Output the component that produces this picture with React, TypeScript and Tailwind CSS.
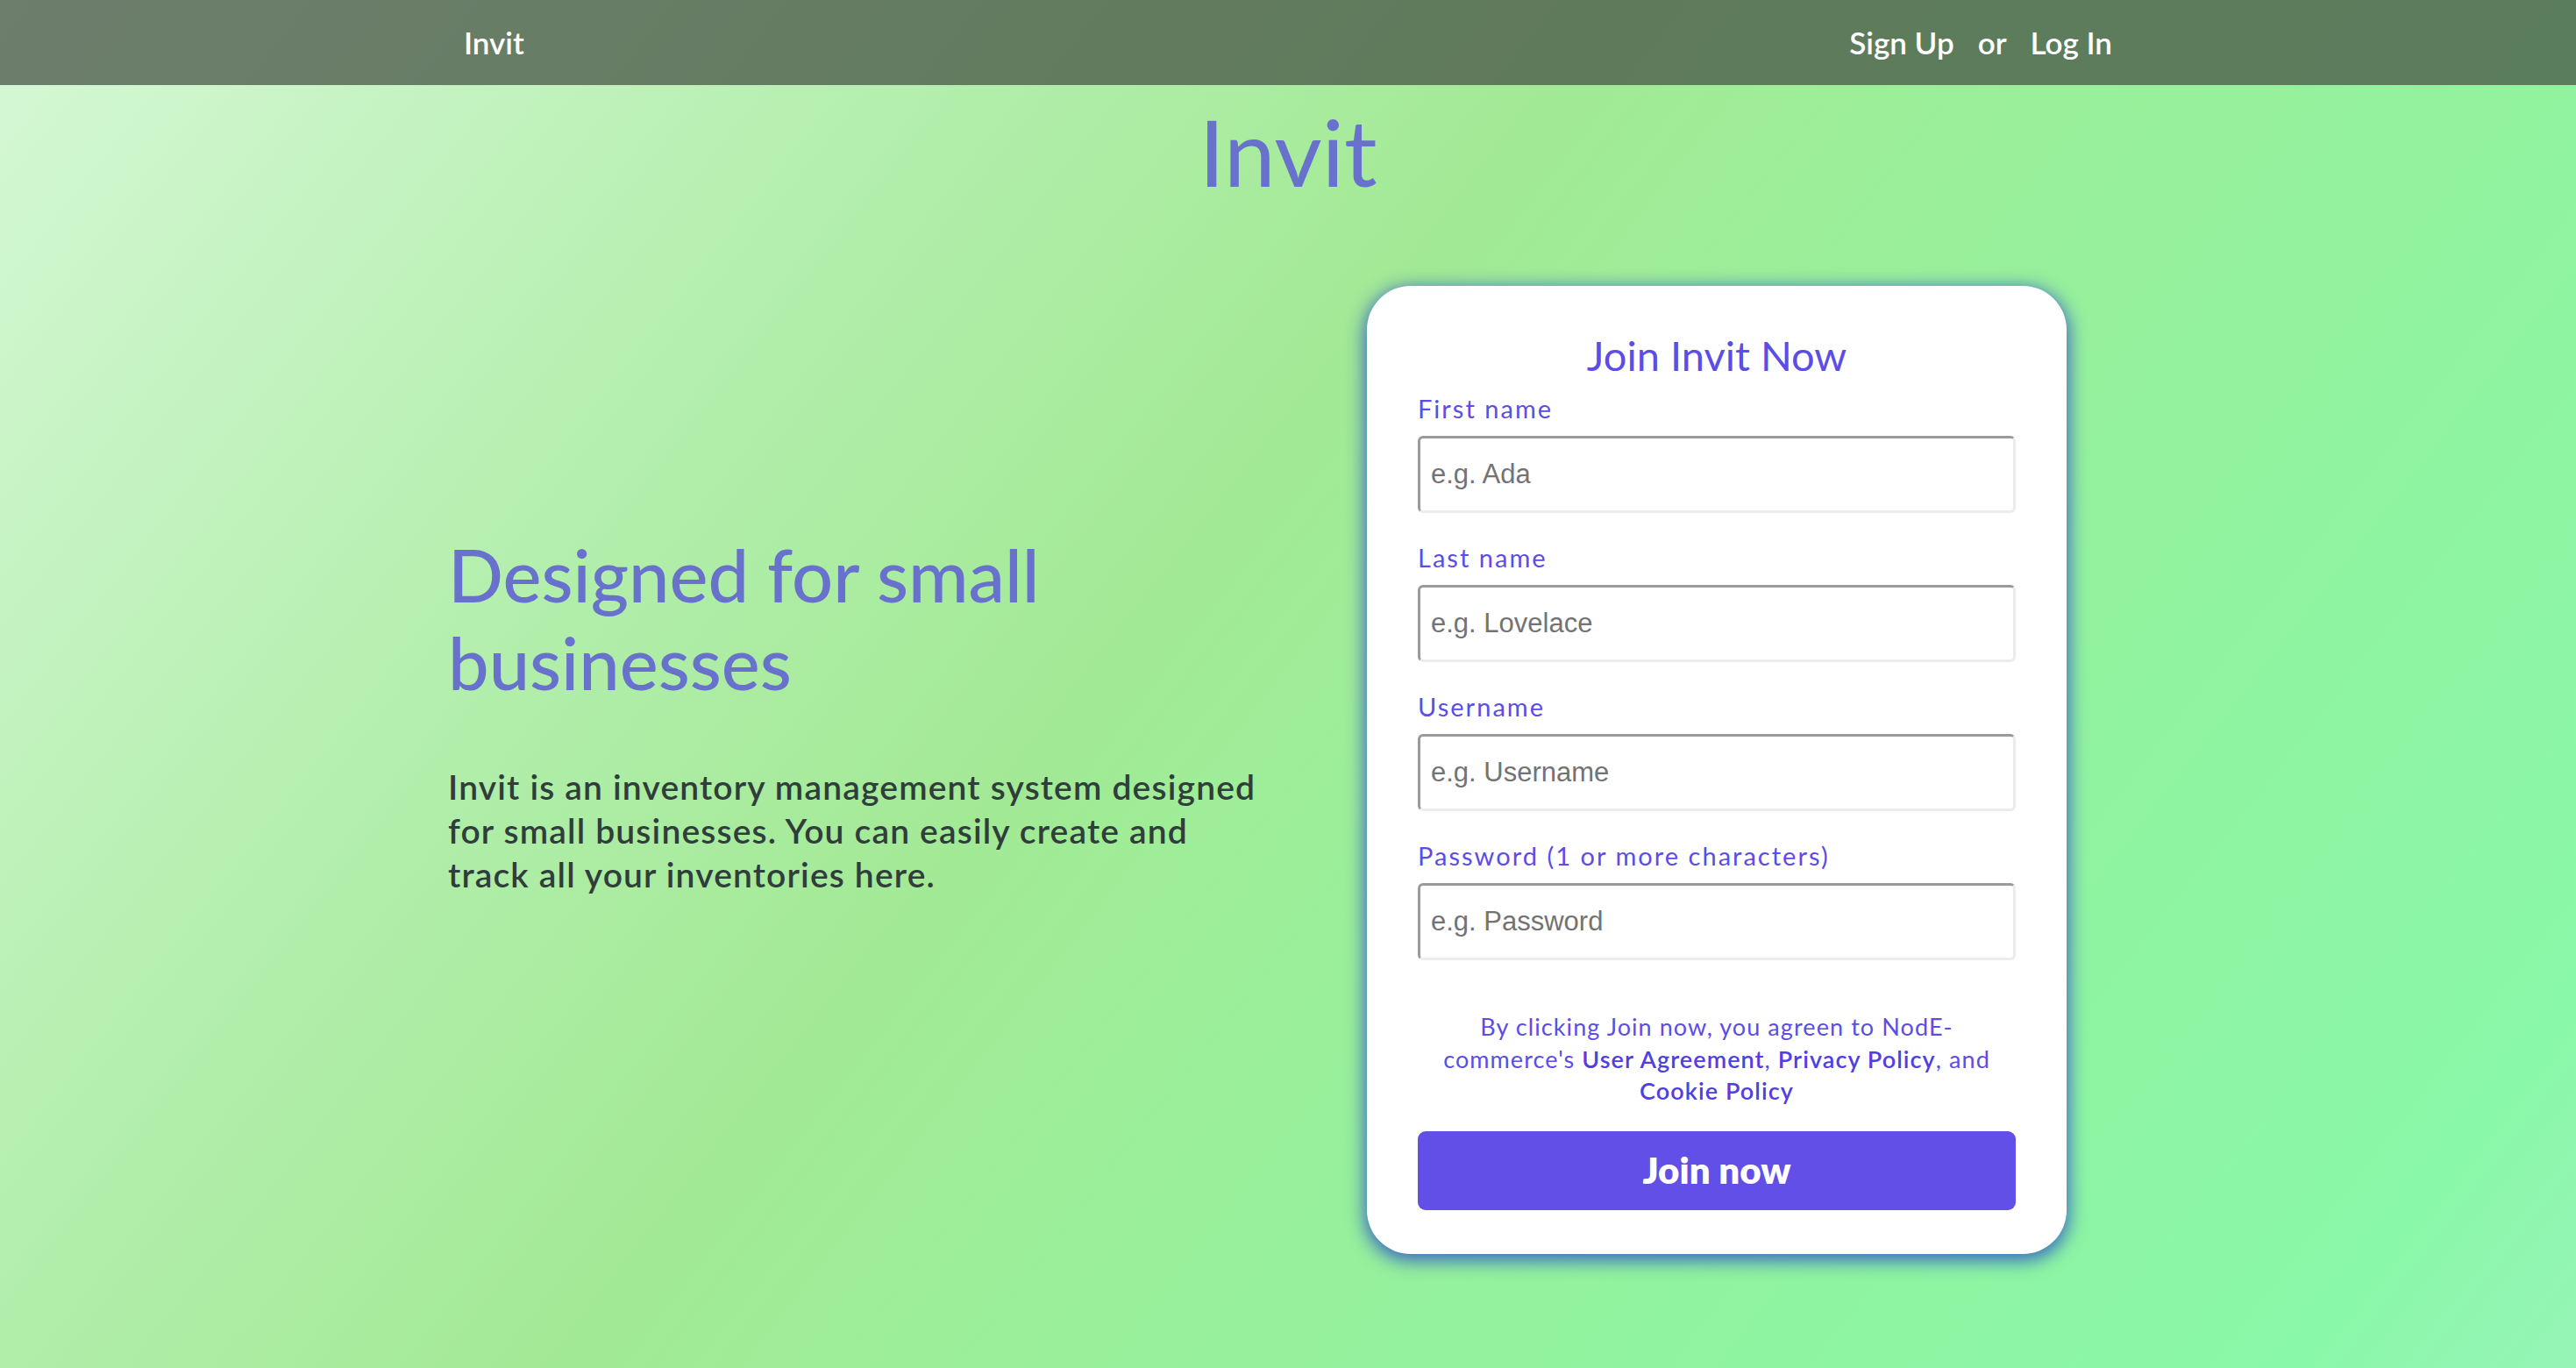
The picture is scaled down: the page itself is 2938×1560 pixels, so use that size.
const fields = [
  { label: 'First name', placeholder: 'e.g. Ada', type: 'text' },
  { label: 'Last name', placeholder: 'e.g. Lovelace', type: 'text' },
  { label: 'Username', placeholder: 'e.g. Username', type: 'text' },
  { label: 'Password (1 or more characters)', placeholder: 'e.g. Password', type: 'password' },
];

const App = () => {
  return (
    <div className="min-h-screen w-full bg-[linear-gradient(128deg,#d6f8d6_0%,#b1eeaa_29%,#a2e995_45%,#9fed98_50%,#91f39f_73%,#89f8a8_92%,#96f4b6_100%)] font-['Lato',sans-serif] pb-[128px]">
      <nav className="h-[97px] bg-[rgba(70,81,69,0.73)]">
        <div className="w-[1978px] mx-auto h-full px-[49px] flex items-center justify-between text-white text-[35px] font-semibold">
          <a href="#">Invit</a>
          <div className="flex items-center gap-[27px]">
            <a href="#">Sign Up</a>
            <span>or</span>
            <a href="#">Log In</a>
          </div>
        </div>
      </nav>

      <h1 className="mt-[23px] mb-[101px] text-center text-[105px] leading-none text-[#6872cc]">Invit</h1>

      <div className="w-[1978px] mx-auto grid grid-cols-2">
        <div className="pl-[31px] pt-[279px]">
          <h2 className="max-w-[800px] text-[83px] leading-[100px] font-medium text-[#6872cc]">
            Designed for small businesses
          </h2>
          <p className="mt-[67px] text-[39px] leading-[50px] font-semibold tracking-[0.03em] text-[#2f3d3b]">
            Invit is an inventory management system designed
            <br />
            for small businesses. You can easily create and
            <br />
            track all your inventories here.
          </p>
        </div>

        <div className="pl-[90px]">
          <form className="w-[798px] bg-white rounded-[50px] px-[58px] pt-[52px] pb-[50px] shadow-[0_5px_20px_3px_rgba(45,85,200,0.85)]">
            <h3 className="text-center text-[47px] leading-[55px] text-[#5b4de6]">Join Invit Now</h3>
            <div className="mt-[13px]">
              {fields.map((field) => (
                <div key={field.label} className="mb-[31px] last:mb-0">
                  <label className="block mb-[11px] text-[29px] leading-[40px] tracking-[0.07em] text-[#5b4de6]">
                    {field.label}
                  </label>
                  <input
                    type={field.type}
                    placeholder={field.placeholder}
                    className="w-full h-[88px] px-[12px] rounded-[6px] border-[3px] border-t-[#9a9a9a] border-l-[#9a9a9a] border-b-[#ececec] border-r-[#ececec] bg-white font-['Liberation_Sans',sans-serif] text-[31px] text-[#333] placeholder:text-[#737373] outline-none"
                  />
                </div>
              ))}
            </div>

            <p className="mt-[58px] text-center text-[27px] leading-[36.5px] tracking-[0.04em] text-[#5b4de6]">
              By clicking Join now, you agreen to NodE-
              <br />
              commerce's <a href="#" className="font-semibold text-[#4f40e2]">User Agreement</a>,{' '}
              <a href="#" className="font-semibold text-[#4f40e2]">Privacy Policy</a>, and
              <br />
              <a href="#" className="font-semibold text-[#4f40e2]">Cookie Policy</a>
            </p>

            <button
              type="button"
              className="mt-[27px] w-full h-[90px] rounded-[9px] bg-[#614fe8] text-white text-[42px] font-extrabold"
            >
              Join now
            </button>
          </form>
        </div>
      </div>
    </div>
  );
};

export default App;
